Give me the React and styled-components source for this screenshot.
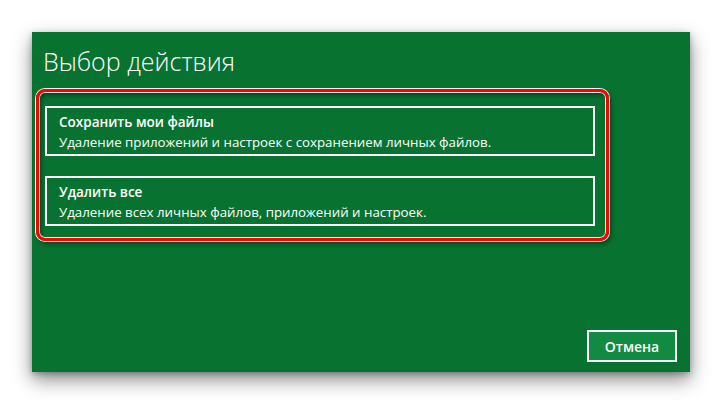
import React from "react";
import styled, { createGlobalStyle } from "styled-components";

const Global = createGlobalStyle`
  html, body { margin: 0; padding: 0; background: #ffffff; }
  body { font-family: "Open Sans", "Noto Sans", sans-serif; }
`;

const Page = styled.div`
  width: 722px;
  height: 404px;
  padding: 32px 0 0 32px;
  box-sizing: border-box;
`;

const Panel = styled.div`
  width: 658px;
  height: 340px;
  background: #087331;
  box-shadow: 0 8px 18px rgba(0, 0, 0, 0.45), 0 2px 6px rgba(0, 0, 0, 0.25);
  display: flex;
  flex-direction: column;
  box-sizing: border-box;
  padding: 12px 0 10px 0;
  color: #fff;
`;

const Title = styled.h1`
  margin: 0 0 0 11px;
  font-family: "Open Sans", sans-serif;
  font-weight: 300;
  font-size: 25px;
  line-height: 34px;
  letter-spacing: 0;
  color: #ffffff;
`;

const Highlight = styled.div`
  margin: 11px 0 0 4px;
  width: 573px;
  box-sizing: border-box;
  border: 3px solid #ff0000;
  border-radius: 9px;
  box-shadow: 0 0 0 1px #f4f4f4, 2px 3px 5px rgba(0, 0, 0, 0.45),
    inset 0 0 0 1px #e8e8e8, inset 2px 3px 5px rgba(0, 0, 0, 0.45);
  padding: 14px 0 12px 6px;
  display: flex;
  flex-direction: column;
  gap: 20px;
`;

const Option = styled.div`
  width: 550px;
  height: 50px;
  box-sizing: border-box;
  border: 2px solid #ffffff;
  padding: 4px 0 0 12px;
  display: flex;
  flex-direction: column;
`;

const OptionTitle = styled.div`
  font-family: "Open Sans", sans-serif;
  font-weight: 600;
  font-size: 13.5px;
  line-height: 20px;
`;

const OptionText = styled.div`
  font-family: "Open Sans", sans-serif;
  font-weight: 400;
  font-size: 13.3px;
  line-height: 20px;
`;

const Footer = styled.div`
  margin-top: auto;
  display: flex;
  justify-content: flex-end;
  padding-right: 13px;
`;

const CancelButton = styled.button`
  width: 90px;
  height: 32px;
  box-sizing: border-box;
  border: 2px solid #ffffff;
  background: #138a42;
  color: #ffffff;
  font-family: "Open Sans", sans-serif;
  font-weight: 600;
  font-size: 14px;
  padding: 0;
  cursor: pointer;
`;

const options = [
  {
    title: "Сохранить мои файлы",
    text: "Удаление приложений и настроек с сохранением личных файлов.",
  },
  {
    title: "Удалить все",
    text: "Удаление всех личных файлов, приложений и настроек.",
  },
];

export default function App() {
  return (
    <>
      <Global />
      <Page>
        <Panel>
          <Title>Выбор действия</Title>
          <Highlight>
            {options.map((o) => (
              <Option key={o.title}>
                <OptionTitle>{o.title}</OptionTitle>
                <OptionText>{o.text}</OptionText>
              </Option>
            ))}
          </Highlight>
          <Footer>
            <CancelButton>Отмена</CancelButton>
          </Footer>
        </Panel>
      </Page>
    </>
  );
}
